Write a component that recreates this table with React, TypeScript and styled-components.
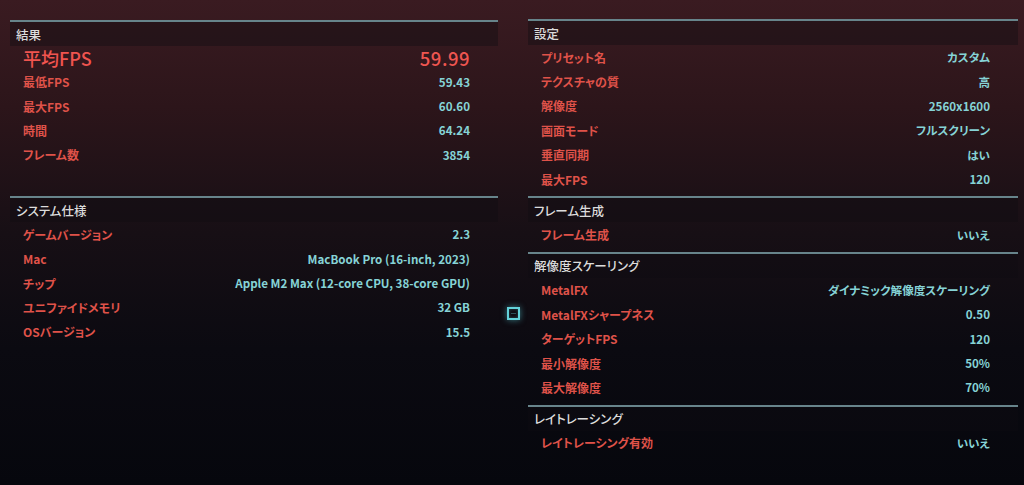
import React from "react";
import styled, { createGlobalStyle } from "styled-components";

type Item = { label: string; value: string; big?: boolean };
type Section = { title: string; items: Item[] };

const results: Section = {
  title: "結果",
  items: [
    { label: "平均FPS", value: "59.99", big: true },
    { label: "最低FPS", value: "59.43" },
    { label: "最大FPS", value: "60.60" },
    { label: "時間", value: "64.24" },
    { label: "フレーム数", value: "3854" },
  ],
};

const system: Section = {
  title: "システム仕様",
  items: [
    { label: "ゲームバージョン", value: "2.3" },
    { label: "Mac", value: "MacBook Pro (16-inch, 2023)" },
    { label: "チップ", value: "Apple M2 Max (12-core CPU, 38-core GPU)" },
    { label: "ユニファイドメモリ", value: "32 GB" },
    { label: "OSバージョン", value: "15.5" },
  ],
};

const settings: Section[] = [
  {
    title: "設定",
    items: [
      { label: "プリセット名", value: "カスタム" },
      { label: "テクスチャの質", value: "高" },
      { label: "解像度", value: "2560x1600" },
      { label: "画面モード", value: "フルスクリーン" },
      { label: "垂直同期", value: "はい" },
      { label: "最大FPS", value: "120" },
    ],
  },
  {
    title: "フレーム生成",
    items: [{ label: "フレーム生成", value: "いいえ" }],
  },
  {
    title: "解像度スケーリング",
    items: [
      { label: "MetalFX", value: "ダイナミック解像度スケーリング" },
      { label: "MetalFXシャープネス", value: "0.50" },
      { label: "ターゲットFPS", value: "120" },
      { label: "最小解像度", value: "50%" },
      { label: "最大解像度", value: "70%" },
    ],
  },
  {
    title: "レイトレーシング",
    items: [{ label: "レイトレーシング有効", value: "いいえ" }],
  },
];

const GlobalStyle = createGlobalStyle`
  html, body {
    margin: 0;
    padding: 0;
    background: #07080e;
  }
  body {
    font-family: "Noto Sans CJK JP", "Noto Sans", sans-serif;
    font-feature-settings: "palt";
  }
`;

const Page = styled.div`
  width: 1024px;
  height: 485px;
  overflow: hidden;
  box-sizing: border-box;
  padding: 19px 6px 0 10px;
  display: flex;
  background: linear-gradient(
    180deg,
    #3a1b21 0%,
    #2c151a 22%,
    #170f15 48%,
    #0b0a11 72%,
    #06070d 100%
  );
`;

const Column = styled.div`
  width: 488px;
  display: flex;
  flex-direction: column;
  gap: 24px;
  padding-top: 1px;
`;

const RightColumn = styled.div`
  width: 490px;
  display: flex;
  flex-direction: column;
`;

const Gutter = styled.div`
  width: 30px;
  display: flex;
  justify-content: center;
  padding-top: 288px;
  box-sizing: border-box;
`;

const Check = styled.div`
  width: 9px;
  height: 9px;
  border: 2px solid #63d2da;
  box-shadow: 0 0 6px rgba(90, 210, 220, 0.55),
    inset 0 0 3px rgba(90, 210, 220, 0.35);
  display: flex;
  align-items: center;
  justify-content: center;

  &::after {
    content: "";
    width: 5px;
    height: 1px;
    background: rgba(99, 210, 218, 0.35);
  }
`;

const Block = styled.section`
  border-top: 2px solid #67848b;
  padding-bottom: 5px;
`;

const Header = styled.div`
  height: 24px;
  display: flex;
  align-items: center;
  padding-left: 6px;
  background: rgba(14, 12, 18, 0.4);
  color: #dcdcdc;
  font-size: 12.5px;
  font-weight: 500;
`;

const Row = styled.div<{ $big?: boolean }>`
  height: ${(p) => (p.$big ? "23.5px" : "24.4px")};
  display: flex;
  align-items: center;
  justify-content: space-between;
  padding: 0 28px 0 13px;
`;

const Label = styled.span<{ $big?: boolean }>`
  color: ${(p) => (p.$big ? "#f0544f" : "#df5249")};
  font-size: ${(p) => (p.$big ? "18px" : "12px")};
  font-weight: ${(p) => (p.$big ? 500 : 700)};
  white-space: nowrap;
`;

const Value = styled.span<{ $big?: boolean }>`
  color: ${(p) => (p.$big ? "#ef5651" : "#86d3d6")};
  font-size: ${(p) => (p.$big ? "18.5px" : "11.6px")};
  font-weight: ${(p) => (p.$big ? 500 : 700)};
  letter-spacing: ${(p) => (p.$big ? "0.5px" : "0")};
  white-space: nowrap;
`;

const SectionBlock = ({ section }: { section: Section }) => (
  <Block>
    <Header>{section.title}</Header>
    {section.items.map((item, index) => (
      <Row key={index} $big={item.big}>
        <Label $big={item.big}>{item.label}</Label>
        <Value $big={item.big}>{item.value}</Value>
      </Row>
    ))}
  </Block>
);

const App = () => {
  return (
    <>
      <GlobalStyle />
      <Page>
        <Column>
          <SectionBlock section={results} />
          <SectionBlock section={system} />
        </Column>
        <Gutter>
          <Check />
        </Gutter>
        <RightColumn>
          {settings.map((section, index) => (
            <SectionBlock key={index} section={section} />
          ))}
        </RightColumn>
      </Page>
    </>
  );
};

export default App;
